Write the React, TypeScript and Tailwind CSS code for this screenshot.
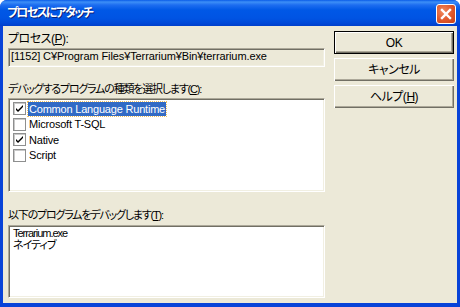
import React from "react";

const font = "font-['Liberation_Sans','Noto_Sans_CJK_JP',sans-serif] [font-feature-settings:'palt']";

function Check({ checked }: { checked: boolean }) {
  return (
    <div className="w-[13px] h-[13px] bg-white border border-[#8e8f8f] shadow-[inset_1px_1px_0_#c9c9c9] flex items-center justify-center shrink-0">
      {checked && (
        <svg width="9" height="9" viewBox="0 0 9 9">
          <path d="M1 4 L3 6 L8 1 L8 3 L3 8 L1 6 Z" fill="#000" />
        </svg>
      )}
    </div>
  );
}

function Btn({ children, def }: { children: React.ReactNode; def?: boolean }) {
  return (
    <div
      className={
        "h-[23px] w-[120px] bg-[#ece9d8] flex items-center justify-center text-[12px] tracking-[-0.5px] text-black " +
        (def
          ? "border border-black shadow-[inset_1px_1px_0_#fff,inset_-1px_-1px_0_#716f64,inset_-2px_-2px_0_#aca899]"
          : "shadow-[inset_1px_1px_0_#fff,inset_-1px_-1px_0_#716f64,inset_-2px_-2px_0_#aca899]")
      }
    >
      {children}
    </div>
  );
}

const sunken =
  "border border-t-[#aca899] border-l-[#aca899] border-b-white border-r-white shadow-[inset_1px_1px_0_#716f64,inset_-1px_-1px_0_#f1efe2]";

export default function App() {
  const items = [
    { label: "Common Language Runtime", checked: true, sel: true },
    { label: "Microsoft T-SQL", checked: false },
    { label: "Native", checked: true },
    { label: "Script", checked: false },
  ];
  return (
    <div className={"w-[460px] h-[307px] flex flex-col rounded-t-[7px] overflow-hidden bg-[#0843d8] " + font}>
      <div className="h-[26px] shrink-0 flex items-center justify-between pl-[7px] pr-[4px] bg-[linear-gradient(to_bottom,#0a5ce8_0px,#3d8ff7_2px,#1d6df0_5px,#0058e6_10px,#0054e3_18px,#0049d8_23px,#003fcb_26px)]">
        <span className="text-white font-bold text-[12px] tracking-[-1.8px] leading-none [text-shadow:1px_1px_0_#0a1f7a]">プロセスにアタッチ</span>
        <div className="w-[20px] h-[20px] mt-[2px] rounded-[3px] border border-white bg-[radial-gradient(circle_at_35%_35%,#f08a60,#e0572a_55%,#c44116)] flex items-center justify-center">
          <svg width="12" height="12" viewBox="0 0 12 12">
            <path d="M2 2 L10 10 M10 2 L2 10" stroke="#fff" strokeWidth="2.4" strokeLinecap="square" />
          </svg>
        </div>
      </div>
      <div className="flex-1 mx-[3px] mb-[4px] bg-[#ece9d8] flex pl-[5px] pt-[5px] gap-[9px] text-black">
        <div className="w-[317px] flex flex-col">
          <div className="h-[14px] mt-[1px] text-[12px] tracking-[-0.5px] leading-[14px]">
            プロセス(<u>P</u>):
          </div>
          <div className={"h-[19px] mt-[2px] text-[11px] leading-[15px] pl-[2px] whitespace-nowrap font-['Liberation_Sans_Narrow','Liberation_Sans',sans-serif] tracking-[-0.1px] " + sunken}>
            [1152] C¥Program Files¥Terrarium¥Bin¥terrarium.exe
          </div>
          <div className="h-[14px] mt-[15px] text-[11px] tracking-[-1.2px] leading-[14px]">
            デバッグするプログラムの種類を選択します(<u>C</u>):
          </div>
          <div className={"h-[94px] mt-[2px] bg-white pt-[2px] pl-[4px] " + sunken}>
            {items.map((it) => (
              <div key={it.label} className="h-[15.5px] flex items-center gap-[2px]">
                <Check checked={it.checked} />
                <span
                  className={
                    "text-[11px] tracking-[-0.2px] leading-[14px] px-[1px] " +
                    (it.sel ? "bg-[#316ac5] text-white outline-1 outline-dotted outline-[#f0c060]" : "")
                  }
                >
                  {it.label}
                </span>
              </div>
            ))}
          </div>
          <div className="h-[14px] mt-[16px] text-[11px] tracking-[-1.2px] leading-[14px]">
            以下のプログラムをデバッグします(<u>T</u>):
          </div>
          <div className={"h-[73px] mt-[3px] bg-white pl-[4px] pt-[1px] text-[11px] tracking-[-1px] leading-[12px] " + sunken}>
            <div>Terrarium.exe</div>
            <div>ネイティブ</div>
          </div>
        </div>
        <div className="flex flex-col gap-[4px]">
          <Btn def>OK</Btn>
          <Btn>キャンセル</Btn>
          <Btn>
            ヘルプ(<u>H</u>)
          </Btn>
        </div>
      </div>
    </div>
  );
}
